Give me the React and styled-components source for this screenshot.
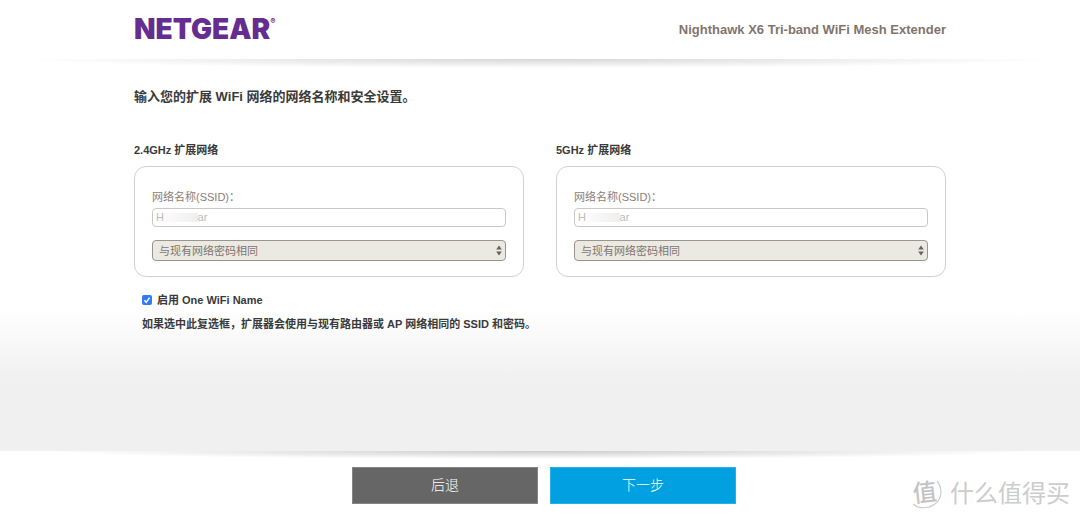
import { useState } from "react";
import styled, { createGlobalStyle } from "styled-components";

const GlobalStyle = createGlobalStyle`
    * {
        box-sizing: border-box;
    }

    body {
        margin: 0;
        background: #fff;
        color: #3a3a3a;
        font-family: "Liberation Sans", "Noto Sans CJK SC", sans-serif;
        font-size: 11px;
    }
`;

const Page = styled.div`
    display: flex;
    flex-direction: column;
    min-height: 100vh;
`;

const Container = styled.div`
    width: 100%;
    max-width: 852px;
    margin: 0 auto;
    padding: 0 20px;
`;

const Header = styled.header`
    padding: 13px 0 14px;
`;

const HeaderRow = styled(Container)`
    display: flex;
    align-items: center;
    justify-content: space-between;
`;

const Logo = styled.a`
    display: flex;
    color: #662d91;
    font-family: Inter, sans-serif;
    font-size: 28px;
    font-weight: 900;
    line-height: 32px;
    text-decoration: none;

    sup {
        font-size: 8px;
        line-height: 16px;
    }
`;

const ProductName = styled.div`
    padding-top: 2px;
    color: #82746e;
    font-size: 13px;
    font-weight: 700;
    line-height: 16px;
`;

const Main = styled.main`
    flex: 1;
    background:
        radial-gradient(ellipse 48% 9px at 50% 0, #d6d6d6, rgba(255, 255, 255, 0)) no-repeat,
        linear-gradient(#fff 250px, #f0f0f0 320px);
`;

const Title = styled.h1`
    margin: 0;
    padding: 28px 0 35px;
    font-size: 13px;
    font-weight: 700;
    line-height: 20px;
`;

const Networks = styled.div`
    display: grid;
    grid-template-columns: 1fr 1fr;
    gap: 32px;
`;

const NetworkTitle = styled.h2`
    margin: 0 0 8px;
    font-size: 11px;
    font-weight: 700;
    line-height: 16px;
`;

const Panel = styled.div`
    padding: 22px 17px 15px;
    border: 1px solid #d2d0cf;
    border-radius: 12px;
    background: #fff;
`;

const FieldLabel = styled.label`
    display: block;
    margin-bottom: 3px;
    color: #8a7d78;
    line-height: 16px;
`;

const SsidInput = styled.input`
    display: block;
    width: 100%;
    height: 19px;
    margin-bottom: 13px;
    padding: 0 3px 1px;
    border: 1px solid #cbc7c5;
    border-radius: 4px;
    background: linear-gradient(90deg, #fcfcfc, #eee) 11px 4px / 34px 9px no-repeat #fff;
    color: #bfb9b6;
    font: inherit;
`;

const SelectBox = styled.div`
    display: grid;
    align-items: center;

    select,
    svg {
        grid-area: 1 / 1;
    }

    svg {
        justify-self: end;
        margin-right: 4px;
        pointer-events: none;
    }
`;

const Select = styled.select`
    width: 100%;
    height: 21px;
    padding: 0 6px;
    appearance: none;
    border: 1px solid #9e928d;
    border-radius: 4px;
    background: #eaeae3;
    color: #82746e;
    font: inherit;
`;

const Option = styled.div`
    padding: 15px 8px 0;
    font-weight: 700;

    label {
        display: flex;
        align-items: center;
        gap: 5px;
        line-height: 16px;
    }

    p {
        margin: 8px 0 0;
        line-height: 16px;
    }
`;

const Checkbox = styled.input`
    width: 10px;
    height: 10px;
    margin: 0;
    appearance: none;
    border-radius: 2px;
    background: #c8c8c8;

    &:checked {
        background: #2f7cf6
            url("data:image/svg+xml,%3Csvg xmlns='http://www.w3.org/2000/svg' viewBox='0 0 10 10'%3E%3Cpath d='M2.4 5.3l1.8 2L7.6 2.6' fill='none' stroke='white' stroke-width='1.4'/%3E%3C/svg%3E");
    }
`;

const Footer = styled.footer`
    display: flex;
    justify-content: center;
    gap: 12px;
    padding: 16px 0 14px 8px;
    background: radial-gradient(ellipse 46% 8px at 50% 0, #ccc, rgba(255, 255, 255, 0)) no-repeat;
`;

const Button = styled.button`
    width: 186px;
    height: 37px;
    padding: 0 0 3px;
    border: 1px solid ${(props) => (props.$primary ? "#29aee5" : "#858585")};
    background: ${(props) => (props.$primary ? "#00a0e1" : "#666")};
    color: #fff;
    font-family: inherit;
    font-size: 14px;
    font-weight: 300;
`;

const Watermark = styled.div`
    position: absolute;
    right: 10px;
    bottom: 8px;
    display: flex;
    align-items: center;
    gap: 8px;
    color: #ccc;
    font-size: 24px;
    line-height: 32px;
    pointer-events: none;
`;

function Arrows() {
    return (
        <svg width="6" height="11" viewBox="0 0 6 11" fill="#6b605c">
            <path d="M3 0.5L5.8 4.5H0.2Z" />
            <path d="M3 10.5L5.8 6.5H0.2Z" />
        </svg>
    );
}

function Network({ id, title }) {
    const [ssid, setSsid] = useState("H" + " ".repeat(11) + "ar");

    return (
        <section>
            <NetworkTitle>{title}</NetworkTitle>
            <Panel>
                <FieldLabel htmlFor={`ssid-${id}`}>网络名称(SSID)：</FieldLabel>
                <SsidInput
                    id={`ssid-${id}`}
                    type="text"
                    value={ssid}
                    onChange={(e) => setSsid(e.target.value)}
                />
                <SelectBox>
                    <Select aria-labelledby={`password-${id}`}>
                        <option id={`password-${id}`}>与现有网络密码相同</option>
                    </Select>
                    <Arrows />
                </SelectBox>
            </Panel>
        </section>
    );
}

function App() {
    const [oneName, setOneName] = useState(true);

    return (
        <Page>
            <GlobalStyle />
            <Header>
                <HeaderRow>
                    <Logo href="#">
                        NETGEAR<sup>®</sup>
                    </Logo>
                    <ProductName>Nighthawk X6 Tri-band WiFi Mesh Extender</ProductName>
                </HeaderRow>
            </Header>
            <Main>
                <Container>
                    <Title>输入您的扩展 WiFi 网络的网络名称和安全设置。</Title>
                    <Networks>
                        <Network id="24" title="2.4GHz 扩展网络" />
                        <Network id="5" title="5GHz 扩展网络" />
                    </Networks>
                    <Option>
                        <label htmlFor="one-name">
                            <Checkbox
                                id="one-name"
                                type="checkbox"
                                checked={oneName}
                                onChange={(e) => setOneName(e.target.checked)}
                            />
                            启用 One WiFi Name
                        </label>
                        <p>如果选中此复选框，扩展器会使用与现有路由器或 AP 网络相同的 SSID 和密码。</p>
                    </Option>
                </Container>
            </Main>
            <Footer>
                <Button type="button">后退</Button>
                <Button type="button" $primary>
                    下一步
                </Button>
            </Footer>
            <Watermark>
                <svg width="32" height="32" viewBox="0 0 32 32" fill="none">
                    <path
                        d="M27 3C33 10 32 21 25 26C18 31 9 31 3 26"
                        stroke="#ccc"
                        strokeWidth="1.2"
                    />
                    <text
                        x="3"
                        y="23"
                        fill="#c4c4c4"
                        fontSize="24"
                        fontWeight="500"
                        transform="rotate(-6 16 16)"
                    >
                        值
                    </text>
                </svg>
                <span>什么值得买</span>
            </Watermark>
        </Page>
    );
}

export default App;
